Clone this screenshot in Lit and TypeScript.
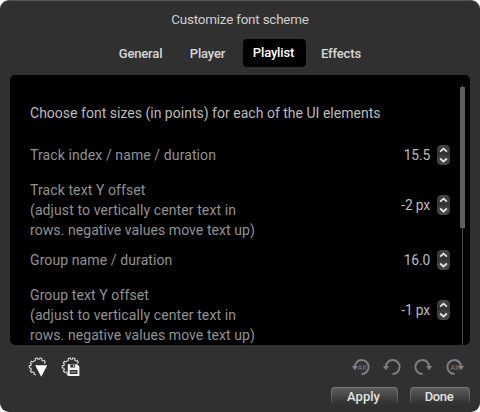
import { LitElement, html, css, svg } from "lit";
import { customElement, property } from "lit/decorators.js";

@customElement("value-stepper")
class ValueStepper extends LitElement {
  @property() value = "";

  static styles = css`
    :host {
      display: flex;
      align-items: center;
      gap: 7px;
      height: 20px;
      color: #bebebe;
      font-size: 13.8px;
      white-space: nowrap;
    }
    svg {
      display: block;
    }
    .value {
      line-height: 20px;
      letter-spacing: -0.15px;
    }
  `;

  render() {
    return html`
      <span class="value">${this.value}</span>
      <svg width="13" height="20" viewBox="0 0 13 20">
        <defs>
          <linearGradient id="g" x1="0" y1="0" x2="0" y2="1">
            <stop offset="0" stop-color="#464646" />
            <stop offset=".5" stop-color="#303030" />
            <stop offset=".52" stop-color="#3b3b3b" />
            <stop offset="1" stop-color="#484848" />
          </linearGradient>
        </defs>
        <rect width="13" height="20" rx="4.5" fill="url(#g)" />
        <path d="M3.1 6.6 6.5 3.6 9.9 6.6M3.1 13.5 6.5 16.5 9.9 13.5" fill="none" stroke="#e4e4e4" stroke-width="1.8" />
      </svg>
    `;
  }
}

const GEAR =
  "M6.3 3.8 7.5 3.2 7.2 1.7 9.2 .9 10 2.3H11.3L12 .9 14 1.6 13.7 3.1 14.9 4 16.3 3.5 17.3 5.4 16.1 6.5M6.3 3.8 5 4.9 3.6 4.2 2.3 6 3.4 7.1 2.9 8.4 1.3 8.7V10.8L2.9 11.2 3.4 12.6 2.3 13.8 3.6 15.5 5 14.8 6.3 15.8 6 17.3 7.8 18.1";
const LOOP = "M3.9 10C3.9 6 6.9 3 10.6 3c3.9 0 7 3.1 7 7s-3.1 7-7.2 7";

@customElement("app-root")
class AppRoot extends LitElement {
  static styles = css`
    :host {
      display: block;
      height: 412px;
      background: #fff;
      font-family: Roboto, "Noto Sans", sans-serif;
      color: #d8d8d8;
    }
    .window {
      box-sizing: border-box;
      height: 412px;
      overflow: hidden;
      border-top: 1px solid #555857;
      border-radius: 9px;
      background: #303030;
      display: flex;
      flex-direction: column;
    }
    .title {
      height: 38px;
      line-height: 38px;
      text-align: center;
      font-size: 13.4px;
      letter-spacing: -0.19px;
      color: #cfcfcf;
    }
    .tabs {
      display: flex;
      height: 28px;
      padding-left: 104px;
      font-size: 13px;
      font-weight: 500;
      line-height: 29px;
      letter-spacing: -0.15px;
    }
    .tab {
      text-align: center;
      white-space: nowrap;
      border-radius: 4px;
    }
    .general { width: 73px; }
    .player { width: 61px; margin-right: 5px; }
    .effects { width: 70px; }
    .playlist {
      width: 63px;
      background: #000;
      color: #fff;
      line-height: 27px;
      text-indent: -2px;
    }
    .panel {
      display: flex;
      justify-content: space-between;
      box-sizing: border-box;
      height: 270px;
      margin: 8px 10px 0;
      padding: 0 5px 0 20px;
      overflow: hidden;
      border-radius: 5px;
      background: #000;
    }
    .list {
      width: 420px;
      padding-top: 28px;
      font-size: 14px;
      color: #929292;
      line-height: 20px;
    }
    .heading {
      height: 20px;
      margin-bottom: 22px;
      letter-spacing: 0.015px;
      color: #bcbcbc;
    }
    .row {
      display: flex;
      justify-content: space-between;
      height: 20px;
      margin-bottom: 15px;
      white-space: nowrap;
      letter-spacing: 0.07px;
    }
    .tall {
      height: 60px;
      margin-bottom: 10px;
    }
    .tall value-stepper { padding-top: 15px; }
    .line { display: block; }
    .l0 { letter-spacing: 0.1px; }
    .l1 { letter-spacing: 0.1px; }
    .scroll {
      display: flex;
      flex-direction: column;
      align-items: center;
      width: 5px;
      padding-top: 10px;
    }
    .stub, .rail { width: 1px; background: #484848; }
    .stub { height: 2px; flex: none; }
    .rail { flex: 1; }
    .thumb { width: 5px; height: 141px; flex: none; background: #5e5e5e; }
    .icons {
      display: flex;
      align-items: center;
      height: 42px;
      padding: 2px 15.5px 0 27.5px;
      box-sizing: border-box;
    }
    .icons svg { display: block; flex: none; }
    .gear { margin-right: 13px; }
    .space { flex: 1; }
    .loops { display: flex; gap: 11.3px; }
    .buttons {
      display: flex;
      justify-content: flex-end;
      gap: 12px;
      padding-right: 10px;
    }
    .button {
      box-sizing: border-box;
      height: 18px;
      border-radius: 4px;
      text-align: center;
      text-indent: -2px;
      font-size: 13px;
      font-weight: 500;
      color: #e2e2e2;
      background:
        linear-gradient(#5c5c5c 0%, #454545 50%, #303030 100%) padding-box,
        linear-gradient(#7b7b7b 0%, #585858 75%, #303030 100%) border-box;
      border: 1px solid transparent;
      line-height: 18px;
    }
    .apply { width: 67px; }
    .done { width: 60px; letter-spacing: -0.35px; }
  `;

  private row(label: string[], value: string) {
    return html`<div class="row ${label.length > 1 ? "tall" : ""}">
      <div>${label.map((l, i) => html`<span class="line l${i}">${l}</span>`)}</div>
      <value-stepper value=${value}></value-stepper>
    </div>`;
  }

  private loop(forward: boolean, all: boolean) {
    return html`<svg width="20" height="20" viewBox="0 0 20 20">
      <g transform=${forward ? "translate(20 0) scale(-1 1)" : ""}>
        <path d=${LOOP} fill="none" stroke="#808080" stroke-width="1.9" />
        <path d="M.8 9H7L3.9 13.3Z" fill="#808080" />
      </g>
      ${all ? svg`<text x=${forward ? 9.6 : 10.8} y="12.6" text-anchor="middle" font-size="7.5" fill="#808080">All</text>` : ""}
    </svg>`;
  }

  render() {
    const note = ["(adjust to vertically center text in", "rows. negative values move text up)"];
    return html`<div class="window">
      <div class="title">Customize font scheme</div>
      <div class="tabs">
        <div class="tab general">General</div>
        <div class="tab player">Player</div>
        <div class="tab playlist">Playlist</div>
        <div class="tab effects">Effects</div>
      </div>
      <div class="panel">
        <div class="list">
          <div class="heading">Choose font sizes (in points) for each of the UI elements</div>
          ${this.row(["Track index / name / duration"], "15.5")}
          ${this.row(["Track text Y offset", ...note], "-2 px")}
          ${this.row(["Group name / duration"], "16.0")}
          ${this.row(["Group text Y offset", ...note], "-1 px")}
        </div>
        <div class="scroll">
          <div class="stub"></div>
          <div class="thumb"></div>
          <div class="rail"></div>
        </div>
      </div>
      <div class="icons">
        <svg class="gear" width="20" height="20" viewBox="0 0 20 20">
          <path d=${GEAR} fill="none" stroke="#d8d8d8" stroke-width="1.1" />
          <path d="M7.2 8.2H19.2L13.2 19.7Z" fill="#fff" />
        </svg>
        <svg width="20" height="20" viewBox="0 0 20 20">
          <path d=${GEAR} fill="none" stroke="#d8d8d8" stroke-width="1.1" />
          <path d="M6.8 7.3H16L18.4 9.5V19H6.8Z" fill="#f2f2f2" />
          <path d="M9.3 7.6h4.8v3H9.3zM8.8 13h7.6v4H8.8z" fill="#303030" />
          <path d="M12 8h1.2v2H12zM9.6 14.4h5.6v1.1H9.6z" fill="#bbb" />
        </svg>
        <div class="space"></div>
        <div class="loops">
          ${this.loop(false, true)} ${this.loop(false, false)} ${this.loop(true, false)} ${this.loop(true, true)}
        </div>
      </div>
      <div class="buttons">
        <div class="button apply">Apply</div>
        <div class="button done">Done</div>
      </div>
    </div>`;
  }
}
